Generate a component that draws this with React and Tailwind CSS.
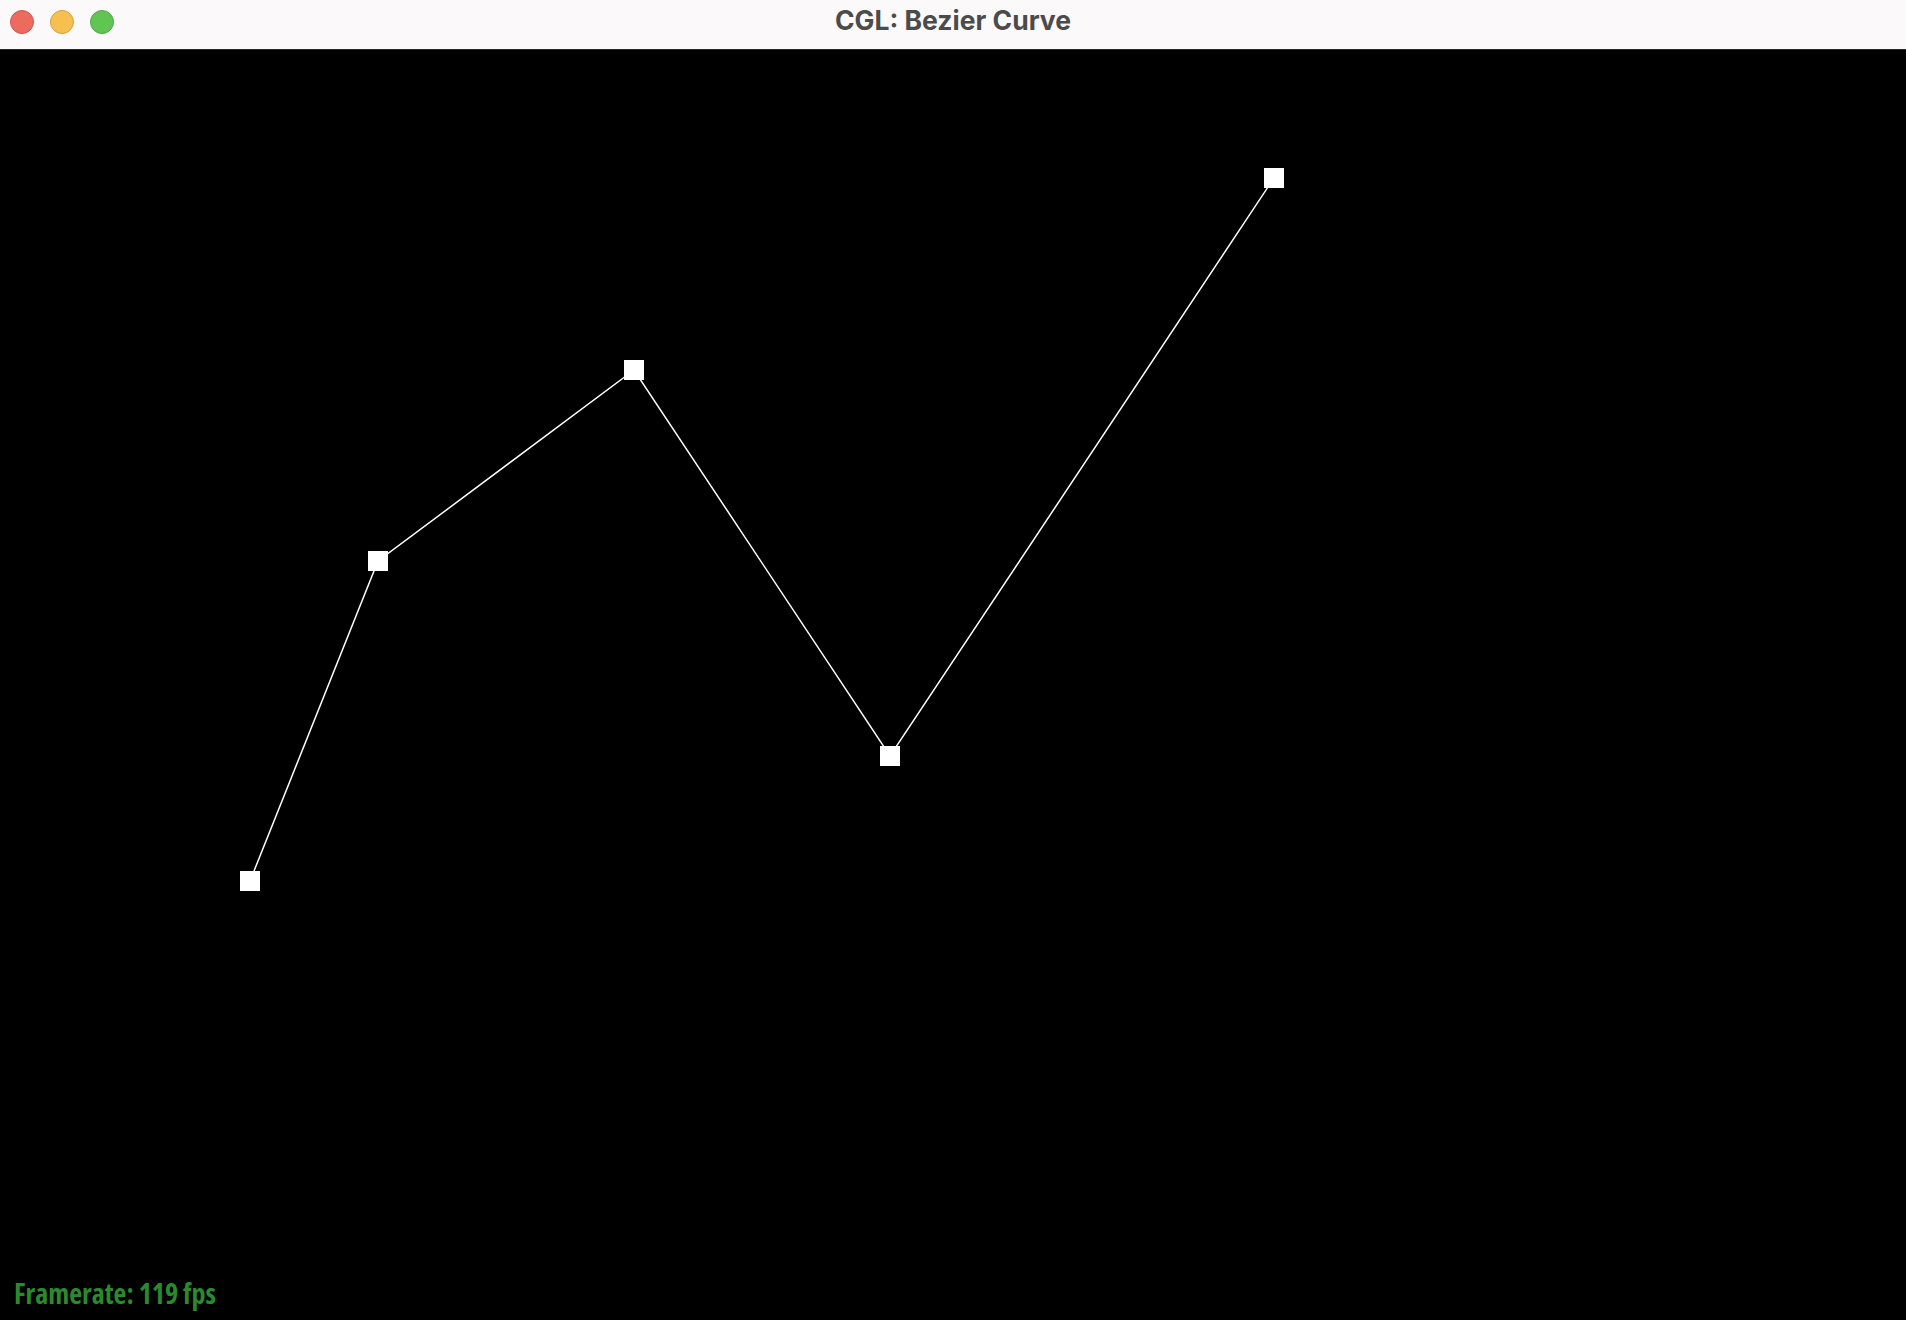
import React from "react";

const pts = [
  [250, 831],
  [378, 511],
  [634, 320],
  [890, 706],
  [1274, 128],
];

export default function App() {
  return (
    <div className="flex flex-col w-[1906px] h-[1320px] overflow-hidden bg-black">
      <div className="relative h-[50px] shrink-0 bg-[#fbf9fa] border-b border-[#2a2a2a] flex items-center justify-center">
        <div className="absolute left-[10px] top-[10px] flex gap-[16px]">
          <div className="w-[24px] h-[24px] rounded-full bg-[#ed6a5e] border border-[#d25549]" />
          <div className="w-[24px] h-[24px] rounded-full bg-[#f5c04f] border border-[#d9a23c]" />
          <div className="w-[24px] h-[24px] rounded-full bg-[#61c554] border border-[#4ea844]" />
        </div>
        <div className="text-[26.5px] font-bold text-[#4b4b4b] leading-none pb-[8px] [font-family:Inter,'Liberation_Sans',sans-serif]">
          CGL: Bezier Curve
        </div>
      </div>
      <div className="relative flex-1 bg-black">
        <svg width="1906" height="1270" className="block">
          <polyline
            points={pts.map((p) => p.join(",")).join(" ")}
            fill="none"
            stroke="#ffffff"
            strokeWidth="1.5"
          />
          {pts.map(([x, y], i) => (
            <rect key={i} x={x - 10} y={y - 10} width="20" height="20" fill="#ffffff" />
          ))}
        </svg>
        <div className="absolute left-[14px] bottom-[13px] text-[28px] font-bold text-[#2b8a2b] leading-none [font-stretch:condensed] [font-family:'Open_Sans',sans-serif]">
          Framerate: 119 fps
        </div>
      </div>
    </div>
  );
}
